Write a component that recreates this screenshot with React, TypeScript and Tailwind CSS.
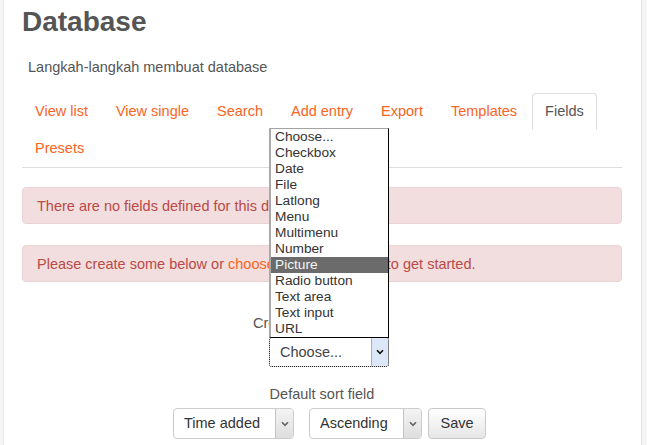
const tabs = ['View list', 'View single', 'Search', 'Add entry', 'Export', 'Templates', 'Fields', 'Presets'];

const fieldTypes = [
  'Choose...',
  'Checkbox',
  'Date',
  'File',
  'Latlong',
  'Menu',
  'Multimenu',
  'Number',
  'Picture',
  'Radio button',
  'Text area',
  'Text input',
  'URL',
];

function Chevron({ className }: { className?: string }) {
  return (
    <svg width="8" height="6" viewBox="0 0 8 6" className={className}>
      <path d="M1 1.2 L4 4.4 L7 1.2" fill="none" stroke="currentColor" strokeWidth="1.6" />
    </svg>
  );
}

function SelectBox({ label, width }: { label: string; width: string }) {
  return (
    <div className={`flex h-[31px] ${width} rounded-[4px] border border-[#cccccc] bg-white overflow-hidden`}>
      <span className="flex-1 pl-[10px] leading-[29px] text-[#333]">{label}</span>
      <span className="w-[18px] flex items-center justify-center border-l border-[#c4c4c4] bg-gradient-to-b from-[#f4f4f4] to-[#dedede] text-[#666]">
        <Chevron />
      </span>
    </div>
  );
}

export default function App() {
  return (
    <div className="flex w-[647px] h-[445px] overflow-hidden bg-white font-['Liberation_Sans',Arial,sans-serif] text-[14.5px] text-[#555]">
      <div className="w-[4px] bg-[#f5f5f5] border-r border-[#e9e9e9]" />

      <main className="flex-1 pl-[18px] pr-[19px] pt-[6px]">
        <h1 className="text-[28px] leading-[31px] font-bold text-[#555]">Database</h1>

        <div className="mt-[20px] pl-[6px] leading-[20px]">Langkah-langkah membuat database</div>

        <ul className="mt-[16px] flex flex-wrap border-b border-[#dddddd]">
          {tabs.map((t) => (
            <li key={t} className="mr-[2px]">
              <span
                className={
                  t === 'Fields'
                    ? 'block px-[12px] pt-[7px] pb-[8px] leading-[20px] border border-[#dddddd] border-b-transparent rounded-t-[4px] bg-white text-[#555]'
                    : 'block px-[12px] pt-[7px] pb-[8px] leading-[20px] border border-transparent text-[#f9641e]'
                }
              >
                {t}
              </span>
            </li>
          ))}
        </ul>

        <div className="mt-[19px] rounded-[4px] border border-[#ebd3d5] bg-[#f2dede] pl-[14px] pt-[8px] pb-[7px] leading-[20px] text-[#b94a48]">
          There are no fields defined for this database.
        </div>
        <div className="mt-[21px] rounded-[4px] border border-[#ebd3d5] bg-[#f2dede] pl-[14px] pt-[8px] pb-[7px] leading-[20px] text-[#b94a48]">
          Please create some below or <span className="text-[#f9641e]">choose a predefined set</span> to get started.
        </div>

        <div className="mt-[31px] pl-[231px] leading-[20px]">Create a new field</div>

        <div className="mt-[4px] pl-[247px]">
          <div className="relative w-[120px]">
            <div className="flex h-[30px] rounded-[3px] border border-dotted border-black bg-white overflow-hidden">
              <span className="flex-1 pl-[10px] leading-[28px] text-[#444]">Choose...</span>
              <span className="w-[17px] flex items-center justify-center border-l border-[#8fb3dd] bg-[#dce8f7] text-[#111]">
                <Chevron />
              </span>
            </div>

            <ul className="absolute left-0 bottom-[29px] w-[120px] bg-white border-t border-t-[#a3a3a3] border-l-2 border-l-[#a9a9a9] border-r border-r-black border-b border-b-black text-[13.7px] leading-[16px] text-[#333]">
              {fieldTypes.map((f) => (
                <li
                  key={f}
                  className={
                    f === 'Picture'
                      ? 'h-[16px] pl-[4px] bg-[#6b6b6b] text-[#f5f5f5] whitespace-nowrap'
                      : 'h-[16px] pl-[4px] whitespace-nowrap'
                  }
                >
                  {f}
                </li>
              ))}
            </ul>
          </div>
        </div>

        <div className="mt-[17px] text-center leading-[20px]">Default sort field</div>

        <div className="mt-[4px] pl-[151px] flex items-center">
          <SelectBox label="Time added" width="w-[121px]" />
          <div className="ml-[15px]">
            <SelectBox label="Ascending" width="w-[113px]" />
          </div>
          <button className="ml-[6px] h-[31px] w-[58px] rounded-[4px] border border-[#c8c8c8] bg-gradient-to-b from-white to-[#e6e6e6] text-[#333] leading-[29px]">
            Save
          </button>
        </div>
      </main>

      <div className="w-[6px] bg-[#f5f5f5] border-l border-[#e4e4e4]" />
    </div>
  );
}
